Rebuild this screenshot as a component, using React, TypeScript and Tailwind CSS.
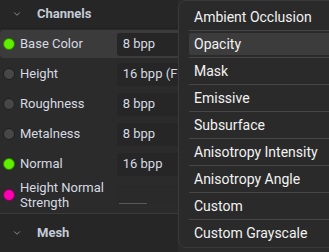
import { ChevronDown } from "lucide-react";

type Channel = {
  name: string;
  value: string;
  dot: "green" | "gray" | "pink";
  active?: boolean;
};

const channels: Channel[] = [
  { name: "Base Color", value: "8 bpp", dot: "green", active: true },
  { name: "Height", value: "16 bpp (FP)", dot: "gray" },
  { name: "Roughness", value: "8 bpp", dot: "gray" },
  { name: "Metalness", value: "8 bpp", dot: "gray" },
  { name: "Normal", value: "16 bpp", dot: "green" },
];

const menuItems = [
  "Ambient Occlusion",
  "Opacity",
  "Mask",
  "Emissive",
  "Subsurface",
  "Anisotropy Intensity",
  "Anisotropy Angle",
  "Custom",
  "Custom Grayscale",
];

function Dot({ kind }: { kind: Channel["dot"] }) {
  const cls =
    kind === "green"
      ? "bg-[#5ef000] border-[#2f7a00]"
      : kind === "pink"
        ? "bg-[#ff00b0] border-[#80005a]"
        : "bg-[#474747] border-[#1f1f1f]";
  return <span className={`block w-[12px] h-[12px] rounded-full border-[1.5px] shrink-0 ${cls}`} />;
}

function SectionHeader({ title, tall }: { title: string; tall?: boolean }) {
  return (
    <div
      className={`flex items-center bg-[#262626] text-[#c3cbd6] ${tall ? "h-[38px]" : "h-[28px]"}`}
    >
      <ChevronDown className="ml-[12px] w-[10px] h-[10px]" strokeWidth={1.5} />
      <span className="ml-[15px] text-[13px] font-bold">{title}</span>
    </div>
  );
}

export default function App() {
  return (
    <div
      className="relative w-[329px] h-[252px] overflow-hidden bg-[#2b2b2b] text-[13px]"
      style={{ fontFamily: "Roboto, 'Liberation Sans', sans-serif" }}
    >
      <div className="w-[178px]">
        <SectionHeader title="Channels" />
        <div className="border-t border-[#222] pt-[1px]">
          {channels.map((c) => (
            <div
              key={c.name}
              className={`flex items-center h-[28px] mb-[2px] pl-[3px] rounded-l-[4px] ${
                c.active ? "bg-[#3b3b3b]" : ""
              }`}
            >
              <Dot kind={c.dot} />
              <span className="ml-[5px] w-[98px] text-[#d6dae2]">{c.name}</span>
              <div className="flex items-center h-[23px] w-[62px] pl-[6px] bg-[#262626] rounded-l-[3px] whitespace-nowrap overflow-hidden text-[#d6dae2]">
                {c.value}
              </div>
            </div>
          ))}
          <div className="flex items-center h-[30px] pl-[3px]">
            <Dot kind="pink" />
            <span className="ml-[5px] w-[98px] leading-[15px] text-[#d6dae2]">
              Height Normal
              <br />
              Strength
            </span>
            <div className="relative h-[20px] w-[62px] bg-[#2a2a2a] rounded-l-[3px]">
              <span className="absolute left-[2px] bottom-[1px] w-[28px] h-[1px] bg-[#5a5a5a]" />
            </div>
          </div>
        </div>
        <div className="mt-[3px] border-t border-[#3a3a3a]">
          <SectionHeader title="Mesh" tall />
        </div>
      </div>

      <div className="absolute left-[178px] top-0 w-[170px] pl-[10px] pt-[3px] pb-[1px] bg-[#2a2a2a] border border-[#3a3a3a] rounded-[8px] text-[14px] text-[#f2f2f2]">
        {menuItems.map((item, i) => (
          <div key={item}>
            {i > 0 && <div className="h-[1px] bg-[#474747]" />}
            <div className="h-[26px] flex items-center">
              <div
                className={`flex items-center w-full h-[22px] pl-[5px] rounded-[2px] ${
                  item === "Opacity" ? "bg-[#3c3c3c]" : ""
                }`}
              >
                {item}
              </div>
            </div>
          </div>
        ))}
      </div>
    </div>
  );
}
